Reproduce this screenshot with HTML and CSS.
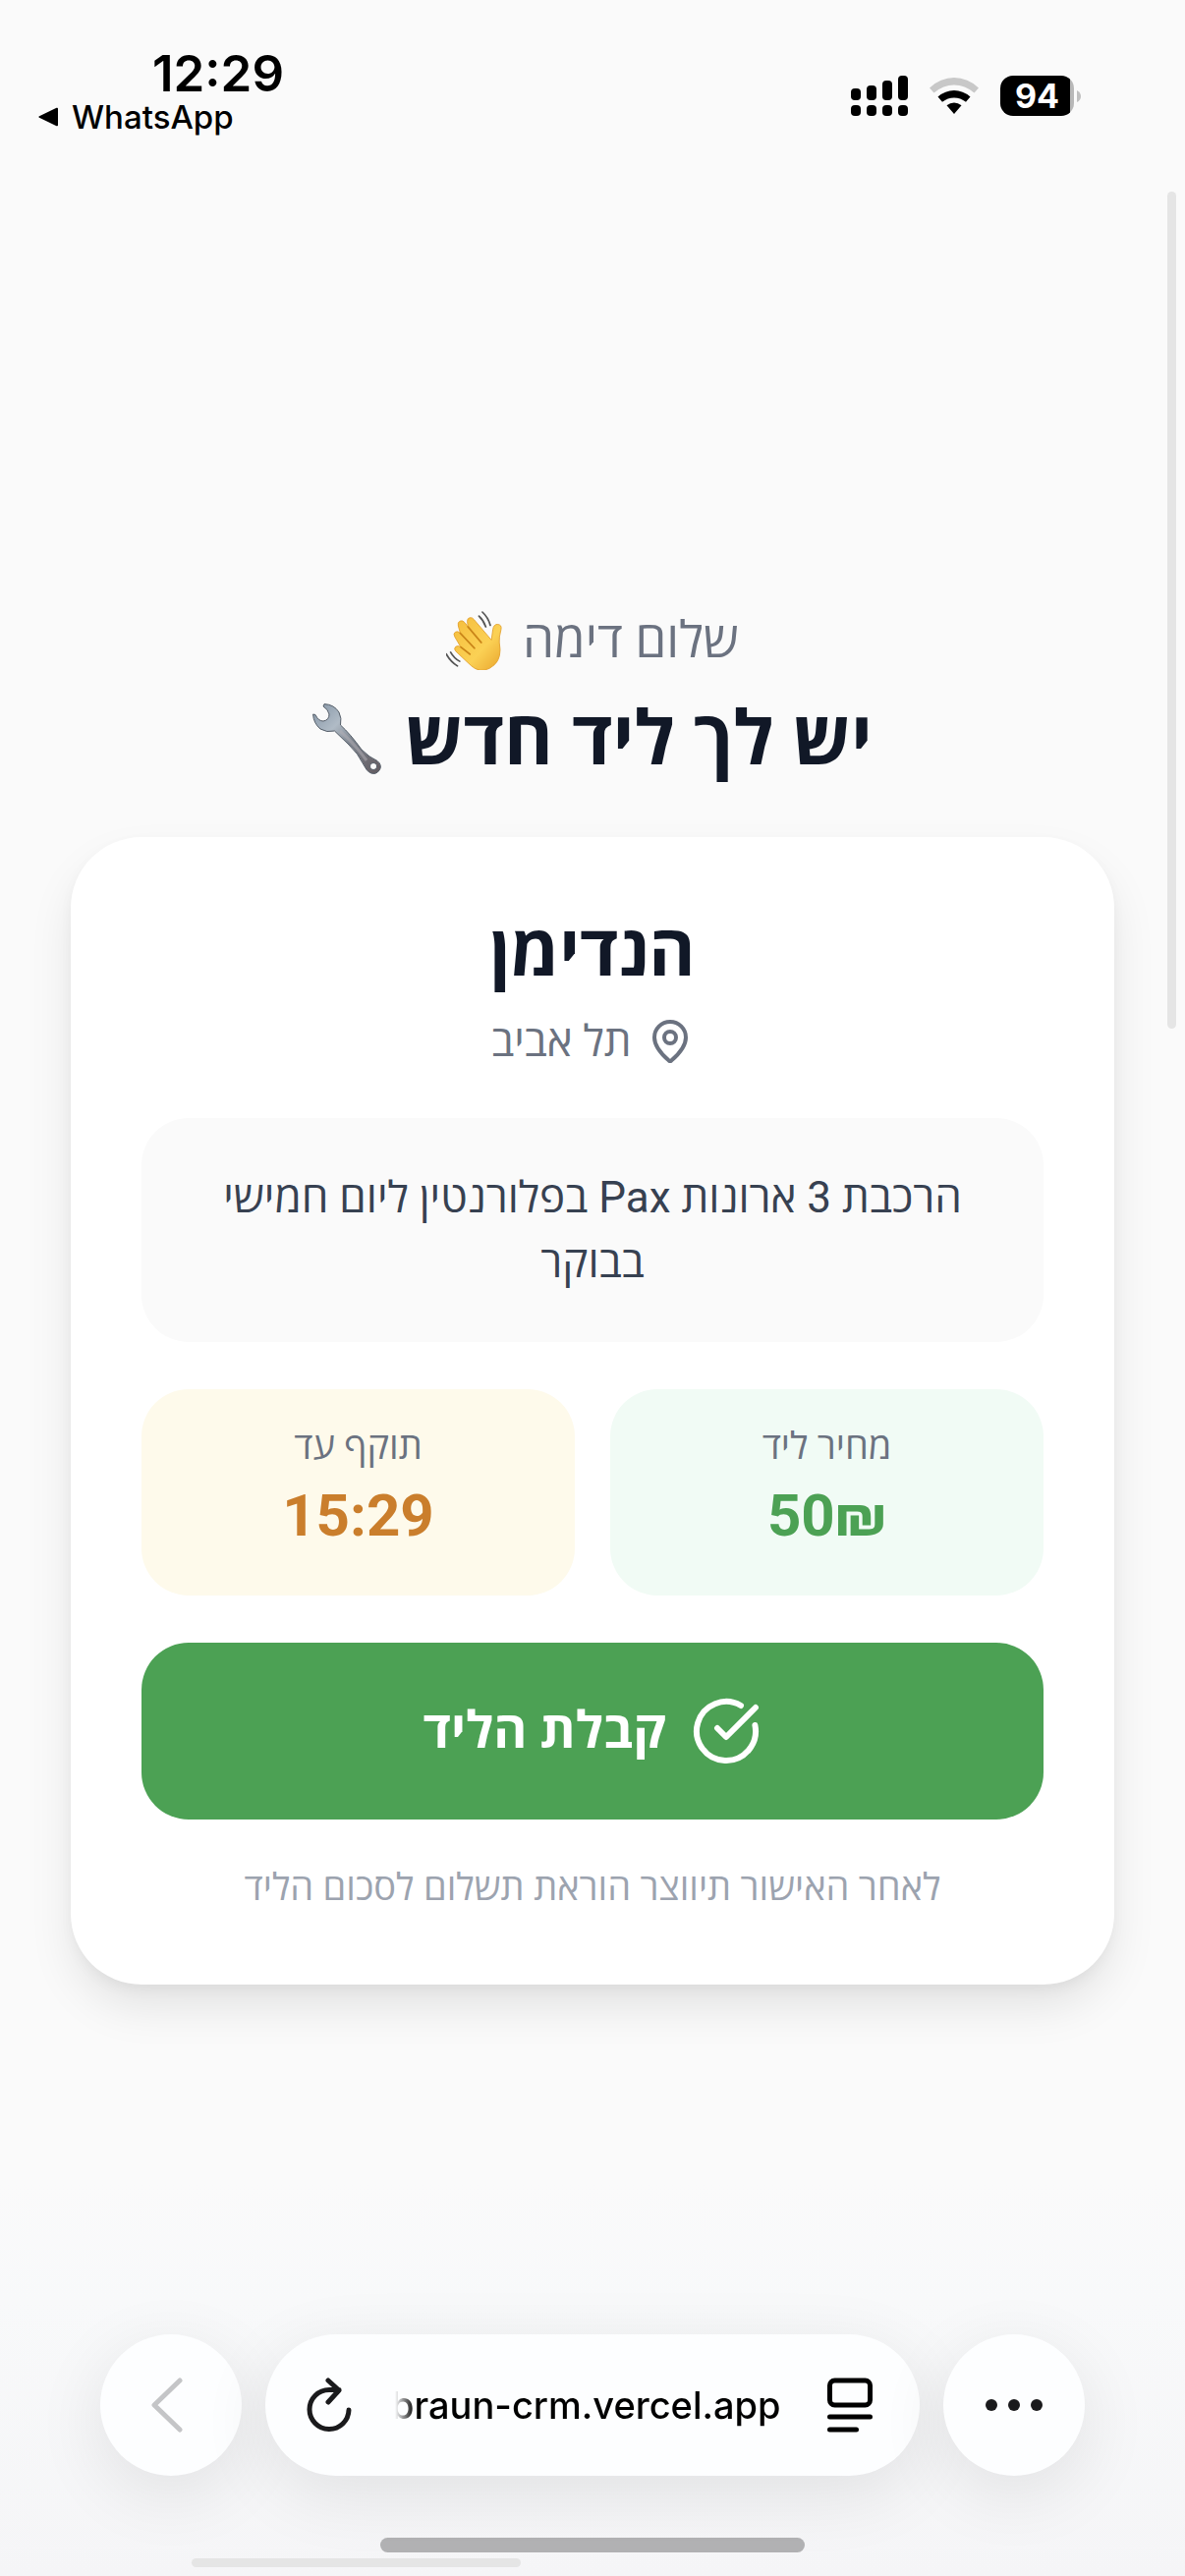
FILE: index.html
```html
<!DOCTYPE html>
<html lang="he" dir="rtl">
<head>
<meta charset="utf-8">
<meta name="viewport" content="width=device-width, initial-scale=1">
<title>ליד חדש</title>
<link rel="stylesheet" href="styles.css">
</head>
<body>
<header class="status" dir="ltr">
  <div class="status-start">
    <time class="clock">12:29</time>
    <a class="back-app" href="#"><svg class="back-arrow" viewBox="0 0 22 22" aria-hidden="true"><path d="M19.500 1.800 2 10.200q-1.600.8 0 1.600l17.500 8.400q1.500.6 1.500-1V2.800q0-1.600-1.500-1z"/></svg>WhatsApp</a>
  </div>
  <div class="status-end">
    <svg class="signal" viewBox="0 0 58 41" aria-hidden="true">
      <rect x="0" y="13" width="10" height="12" rx="4"/><rect x="16" y="10" width="10" height="15" rx="4"/><rect x="32" y="5" width="10" height="20" rx="4"/><rect x="48" y="0" width="10" height="25" rx="4"/>
      <rect x="0" y="30" width="10" height="11" rx="4"/><rect x="16" y="30" width="10" height="11" rx="4"/><rect x="32" y="30" width="10" height="11" rx="4"/><rect x="48" y="30" width="10" height="11" rx="4"/>
    </svg>
    <svg class="wifi" viewBox="0 0 50 37" aria-hidden="true">
      <path d="M0 10.500Q11 0 25 0t25 10.500L45.500 15.500Q36 7.500 25 7.500T4.500 15.500z" fill="#c8c8c8"/>
      <path d="M8.500 19.500Q16 13 25 13t16.500 6.500L37 24.800Q31.500 20.500 25 20.500T13 24.800z"/>
      <path d="M17.500 28.300Q21 25.500 25 25.500t7.500 2.800L25 37z"/>
    </svg>
    <div class="battery"><span class="battery-level">94</span><svg class="battery-cap" viewBox="0 0 4 12" aria-hidden="true"><path d="M0 0q4 2 4 6T0 12z" fill="#c0c0c0"/></svg></div>
  </div>
</header>

<main class="page">
  <p class="greeting">שלום דימה
    <svg class="wave" viewBox="2 0 52 58" preserveAspectRatio="none" role="img" aria-label="נפנוף">
      <defs><linearGradient id="skin" x1="0" y1="0" x2="1" y2="1"><stop offset="0" stop-color="#f5bd3c"/><stop offset=".6" stop-color="#fbd155"/><stop offset="1" stop-color="#e9a52c"/></linearGradient></defs>
      <path d="M21 50.500 10.500 39.500q-2-2.500 0-4.500 2-1.500 4.500.500L9.500 25q-1.500-3 .8-4.500 2-1.200 4.200 1.200l-1.800-7.200q-.8-3.500 1.500-4.700 2.500-1 4.300 1.500l2.800 4.200-.6-5.500q0-3 2.200-3.500 2.300-.5 3.800 2L42 28.500l1.300-10.500q.7-5 4-5 4 .3 3.200 5-2 8-1.500 13 2.500 15-4.500 22-8.500 8.500-17 3.500-3.500-2.500-6.500-6z" fill="url(#skin)" stroke="#e2a02c" stroke-width=".8"/>
      <path d="m15 35.500 8 7M14.500 21.700 27 36.500M21.300 15.500 33 31" fill="none" stroke="#c98418" stroke-width="1.600" stroke-linecap="round"/>
      <path d="M31 5q4 4 6 10.500M34 1q5 5 7 13M6 40.500q3 6 8 9M2 42q4 8 10 12" fill="none" stroke="#555" stroke-width="1.500" stroke-linecap="round"/>
    </svg>
  </p>
  <h1 class="headline">יש לך ליד חדש
    <svg class="wrench" viewBox="0 0 70 72" role="img" aria-label="מפתח ברגים">
      <defs><linearGradient id="steel" x1="0" y1="0" x2="1" y2="1"><stop offset="0" stop-color="#8494a5"/><stop offset=".32" stop-color="#b0bbc6"/><stop offset=".55" stop-color="#7d848e"/><stop offset="1" stop-color="#625a5f"/></linearGradient></defs>
      <path fill-rule="evenodd" d="M12 .6Q22 1 27 9q3 6 1.500 13 10 9 21.500 25Q58 55 66 58.500q5 4 2.500 9-4 6-10 3-3.500-2-5.500-6.500Q46 50 37 42L22.500 28q-8 2-14.500-2Q1 20 .6 11L3 11.500Q6 18 11 18q6-1 6-7-1-5-6-8zM62 60.500a3.500 3.500 0 1 0 .1 0z" fill="url(#steel)" stroke="#555e69" stroke-width="1"/>
      <path d="M28 28Q42 40 55 58" fill="none" stroke="#b3b0b6" stroke-width="3" opacity=".5"/>
    </svg>
  </h1>

  <section class="card">
    <h2 class="name">הנדימן</h2>
    <p class="city">
      <svg class="pin" viewBox="0 0 24 24" aria-hidden="true"><path d="M20 10c0 4.993-5.539 10.193-7.399 11.799a1 1 0 0 1-1.202 0C9.539 20.193 4 14.993 4 10a8 8 0 0 1 16 0"/><circle cx="12" cy="10" r="3"/></svg>
      <span>תל אביב</span>
    </p>
    <p class="details">הרכבת 3 ארונות Pax בפלורנטין ליום חמישי בבוקר</p>
    <dl class="tiles">
      <div class="tile tile-price"><dt>מחיר ליד</dt><dd>50₪</dd></div>
      <div class="tile tile-expiry"><dt>תוקף עד</dt><dd>15:29</dd></div>
    </dl>
    <button class="accept" type="button">
      <svg class="check" viewBox="0 0 24 24" aria-hidden="true"><path d="M21.801 10A10 10 0 1 1 17 3.335"/><path d="m9 11 3 3L22 4"/></svg>
      <span class="accept-label">קבלת הליד</span>
    </button>
    <p class="note">לאחר האישור תיווצר הוראת תשלום לסכום הליד</p>
  </section>
</main>

<footer class="browser" dir="ltr">
  <nav class="toolbar">
    <button class="round" type="button" aria-label="Back"><svg class="chevron" viewBox="0 0 40 56" aria-hidden="true"><path d="M29 3 3 28l26 25"/></svg></button>
    <div class="address">
      <button class="plain" type="button" aria-label="Reload"><svg class="reload" viewBox="0 0 46 56" aria-hidden="true"><path d="M43 33A20 20 0 1 1 23 12.500h10M22 3 33 13 22 25"/></svg></button>
      <input class="url" type="text" aria-label="Address" value="braun-crm.vercel.app" readonly>
      <button class="plain" type="button" aria-label="Page menu"><svg class="reader" viewBox="0 0 46 56" aria-hidden="true"><rect x="2.500" y="3" width="41" height="25" rx="5"/><path d="M2.500 40h41M2.500 53h27"/></svg></button>
    </div>
    <button class="round" type="button" aria-label="More"><svg class="dots" viewBox="0 0 58 12" aria-hidden="true"><circle cx="6" cy="6" r="6"/><circle cx="29" cy="6" r="6"/><circle cx="52" cy="6" r="6"/></svg></button>
  </nav>
  <div class="home-bar"></div>
</footer>
<div class="scroll-y"></div>
<div class="scroll-x"></div>
</body>
</html>
```
FILE: styles.css
```css
* { box-sizing: border-box; margin: 0; }

body {
  position: relative;
  display: flex;
  flex-direction: column;
  min-height: 100vh;
  overflow: hidden;
  background: linear-gradient(to top, #f5f5f7, #f8f9fa 280px, #fafafa 400px);
  color: #111827;
  font-family: Roboto, "Open Sans", "Noto Sans", sans-serif;
}

button, input { border: 0; padding: 0; background: none; font: inherit; color: inherit; }
svg { display: block; flex: none; }

/* Status bar */
.status {
  display: flex;
  justify-content: space-between;
  align-items: flex-start;
  height: 186px;
  padding: 47px 106px 0 38px;
  color: #000;
  font-family: Inter, "Liberation Sans", sans-serif;
}
.status-start { display: flex; flex-direction: column; }
.clock { padding-left: 117px; font-size: 51px; line-height: 56px; font-weight: 600; }
.back-app {
  display: flex;
  align-items: center;
  gap: 13px;
  color: inherit;
  font-size: 33px;
  line-height: 32px;
  font-weight: 500;
  text-decoration: none;
}
.back-arrow { width: 22px; height: 22px; }
.status-end { display: flex; align-items: center; gap: 22px; padding-top: 30px; }
.signal { width: 58px; height: 41px; }
.wifi { width: 50px; height: 37px; }
.battery { display: flex; align-items: center; gap: 3px; }
.battery-level {
  width: 75px;
  height: 41px;
  border-radius: 13px;
  background: linear-gradient(to right, #000 71px, #b8b8b8 71px);
  color: #fff;
  font-size: 34px;
  line-height: 41px;
  font-weight: 700;
  text-align: center;
}
.battery-cap { width: 4px; height: 12px; }

/* Lead page */
.page { padding: 430px 72px 48px; text-align: center; }
.greeting, .headline { display: flex; justify-content: center; align-items: center; }
.greeting { gap: 18px; font-size: 51px; line-height: 72px; color: #6b7280; }
.headline { gap: 24px; margin-top: 10px; font-size: 76px; line-height: 108px; font-weight: 700; }
.wave { width: 60px; height: 60px; }
.wrench { width: 70px; height: 72px; }

.card {
  margin-top: 46px;
  padding: 72px;
  border-radius: 72px;
  background: #fff;
  box-shadow: 0 24px 48px -4px rgb(0 0 0 / 10%), 0 6px 18px -6px rgb(0 0 0 / 8%);
}
.name { font-size: 72px; line-height: 90px; font-weight: 700; }
.city {
  display: flex;
  justify-content: center;
  align-items: center;
  gap: 15px;
  margin-top: 16px;
  color: #6b7280;
  font-size: 44px;
  line-height: 60px;
}
.pin, .check { fill: none; stroke: currentColor; stroke-width: 2; stroke-linecap: round; stroke-linejoin: round; }
.pin { width: 48px; height: 48px; }
.details {
  margin-top: 48px;
  padding: 48px;
  border-radius: 48px;
  background: #fafafa;
  color: #374151;
  font-size: 44px;
  line-height: 66px;
}
.tiles { display: grid; grid-template-columns: 1fr 1fr; gap: 36px; margin-top: 48px; }
.tile { padding: 32px 36px 36px; border-radius: 48px; }
.tile dt { color: #6b7280; font-size: 38px; line-height: 52px; }
.tile dd { font-size: 60px; line-height: 90px; font-weight: 700; }
.tile-price { background: #f1fbf5; }
.tile-price dd { color: #4ca154; }
.tile-expiry { background: #fefaeb; }
.tile-expiry dd { color: #ca7e2c; }
.accept {
  display: flex;
  justify-content: center;
  align-items: center;
  gap: 26px;
  width: 100%;
  height: 180px;
  margin-top: 48px;
  border-radius: 48px;
  background: #4ca154;
  color: #fff;
  font-size: 52px;
  font-weight: 700;
}
.accept-label { padding-bottom: 8px; }
.check { width: 72px; height: 72px; }
.note { margin-top: 42px; color: #9ca3af; font-size: 38px; line-height: 54px; }

/* Browser toolbar */
.browser { margin-top: auto; padding: 0 102px 24px; }
.toolbar { display: flex; gap: 24px; }
.round, .address {
  display: flex;
  align-items: center;
  height: 144px;
  border-radius: 72px;
  background: #fdfeff;
  box-shadow: 0 18px 72px rgb(0 0 0 / 9%);
}
.round { flex: none; justify-content: center; width: 144px; }
.address { flex: 1; min-width: 0; padding: 0 48px 0 42px; }
.plain { flex: none; color: #000; }
.chevron, .reload, .reader { fill: none; stroke-linecap: round; stroke-linejoin: round; stroke-width: 5; }
.chevron { width: 40px; height: 56px; stroke: #c4c5c7; }
.reload { width: 46px; height: 56px; stroke: #1a1a1c; }
.reader { width: 46px; height: 56px; stroke: #000; }
.dots { width: 58px; height: 12px; fill: #1a1a1c; }
.url {
  flex: 1;
  min-width: 0;
  margin: 0 40px;
  color: #000;
  font-family: Inter, "Liberation Sans", sans-serif;
  font-size: 38px;
  font-weight: 500;
  -webkit-mask-image: linear-gradient(to right, transparent 4px, #000 24px);
  mask-image: linear-gradient(to right, transparent 4px, #000 24px);
}
.home-bar { width: 432px; height: 15px; margin: 63px auto 0; border-radius: 8px; background: #b2b2b4; }

/* Scroll indicators over the page */
.scroll-y, .scroll-x { position: absolute; border-radius: 5px; background: #e5e5e5; }
.scroll-y { top: 195px; right: 9px; width: 9px; height: 852px; }
.scroll-x { bottom: 9px; left: 195px; width: 335px; height: 9px; }
```
